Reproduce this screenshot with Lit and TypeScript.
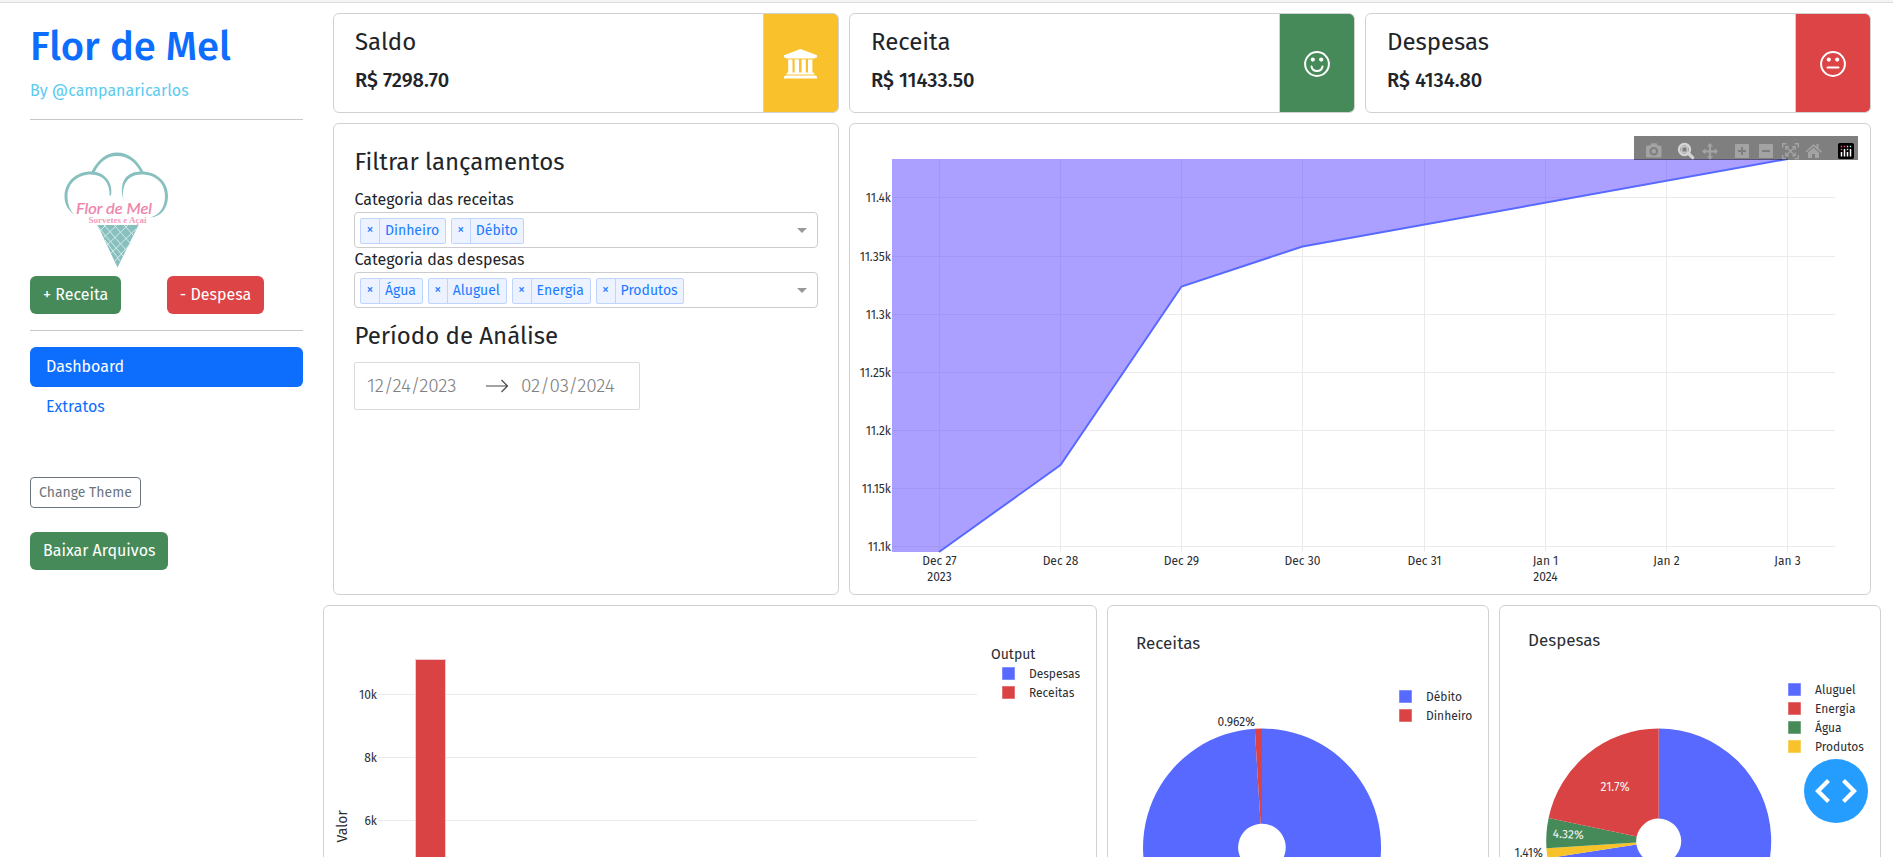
import { LitElement, html, svg, css } from "lit";
import { customElement } from "lit/decorators.js";

const tx = (x: number, y: number, s: string, cls = "t12", anchor = "start") =>
  svg`<text class=${cls} x=${x} y=${y} text-anchor=${anchor}>${s}</text>`;

const BLUE = "#5869ff", RED = "#d94344", GREEN = "#458a58", YELLOW = "#f8c22b";

const sector = (cx: number, cy: number, R: number, r: number, a: number, b: number, fill: string) => {
  const p = (rad: number, f: number) =>
    `${(cx + rad * Math.sin(f * 2 * Math.PI)).toFixed(2)} ${(cy - rad * Math.cos(f * 2 * Math.PI)).toFixed(2)}`;
  const big = b - a > 0.5 ? 1 : 0;
  return svg`<path fill=${fill} d="M${p(R, a)}A${R} ${R} 0 ${big} 1 ${p(R, b)}L${p(r, b)}A${r} ${r} 0 ${big} 0 ${p(r, a)}Z"/>`;
};

const swatch = (x: number, y: number, c: string) =>
  svg`<rect x=${x} y=${y} width="12" height="12" fill=${c} stroke=${c} stroke-opacity="0.5"/>`;

const chartStyles = css`
  :host { display: block; }
  svg { display: block; }
  text { font-family: "Fira Sans", "Noto Sans", "Open Sans", sans-serif; fill: #2a2e33; }
  .t12 { font-size: 12px; }
  .t14 { font-size: 14px; }
  .t17 { font-size: 17px; }
  .white { font-size: 12px; fill: #f4f4f4; }
  .grid { stroke: #ebebec; stroke-width: 1; fill: none; }
`;

@customElement("balance-chart")
class BalanceChart extends LitElement {
  static styles = [chartStyles, css`
    :host { position: relative; }
    .bar { position: absolute; top: 12px; right: 12px; width: 224px; height: 24px; background: rgba(0, 0, 0, 0.5); }
  `];
  render() {
    const xs = [0, 1, 2, 3, 4, 5, 6, 7].map((i) => Math.round(89 + i * 121.15) + 0.5);
    const ys = [73.5, 132.5, 190.5, 248.5, 306.5, 364.5, 422.5];
    const yl = ["11.4k", "11.35k", "11.3k", "11.25k", "11.2k", "11.15k", "11.1k"];
    const xl = ["Dec 27", "Dec 28", "Dec 29", "Dec 30", "Dec 31", "Jan 1", "Jan 2", "Jan 3"];
    return html`
      <svg width="1020" height="470" viewBox="0 0 1020 470">
        <path class="grid" d=${xs.map((x) => `M${x} 35V428`).join("") + ys.map((y) => `M42 ${y}H985`).join("")} />
        <path d="M42 35H937.5L452.5 122.5L331.5 162.5L210.5 341L89.5 428H42Z" fill="#5741ff" fill-opacity="0.5" />
        <path d="M89 428L210.5 341L331.5 162.5L452.5 122.5L937.5 35" fill="none" stroke=${BLUE} stroke-width="2" />
        ${yl.map((s, i) => tx(41, ys[i] + 4.2, s, "t12", "end"))}
        ${xl.map((s, i) => tx(xs[i], 441, s, "t12", "middle"))}
        ${tx(xs[0], 457, "2023", "t12", "middle")}
        ${tx(xs[5], 457, "2024", "t12", "middle")}
      </svg>
      <svg class="bar" viewBox="0 0 224 24">
        <g fill="#a3a3a3">
          <path fill-rule="evenodd" d="M13.5 9.500h2.700l1.300-2.200h5l1.300 2.200h2.200q1.500 0 1.500 1.500v9q0 1.500-1.500 1.500H13.500q-1.500 0-1.500-1.500v-9q0-1.500 1.500-1.500zM19.800 11a4.300 4.300 0 1 0 .01 0zm0 2a2.300 2.300 0 1 1-.01 0z"/>
          <path d="M76 7l3.200 3.600h-2.100v3.700h3.700v-2.100l3.200 3.200-3.200 3.200v-2.100h-3.700v3.700h2.100L76 23.800l-3.200-3.600h2.100v-3.700h-3.700v2.100L68 15.400l3.200-3.200v2.100h3.700v-3.700h-2.100z"/>
          <path fill-rule="evenodd" d="M101 8h14v14h-14zM107 11v3h-3v2h3v3h2v-3h3v-2h-3v-3z"/>
          <path fill-rule="evenodd" d="M125 8h14v14h-14zM128 14v2h8v-2z"/>
          <path d="M171.500 15.500L179.500 8l3 2.700V8h2v4.500l3.500 3-1 1.200-7.500-6.500-7.500 6.500z"/>
          <path d="M174 16.500l5.500-4.800 5.500 4.800V22h-4v-4h-3v4h-4z"/>
        </g>
        <g fill="none" stroke="#a3a3a3" stroke-width="1.400">
          <path d="M148.700 11.500V7.700h3.800M160.500 7.700h3.800v3.800M164.300 19v3.600h-3.800M152.500 22.600h-3.800V19"/>
          <path d="M152.500 11.200l8 8M160.500 11.200l-8 8" />
          <path d="M151.800 14v-3.200h3M158.200 10.800h3V14M161.200 16.500v3.200h-3M154.800 19.700h-3v-3.200" />
        </g>
        <circle cx="50.500" cy="13.500" r="5.400" fill="none" stroke="#d5d5d5" stroke-width="2.600"/>
        <rect x="47.800" y="10.800" width="5.400" height="5.400" fill="none" stroke="#d5d5d5" stroke-width="1.200"/>
        <path d="M54.500 17.500l4.200 4.200" stroke="#d5d5d5" stroke-width="3.200" stroke-linecap="round"/>
        <rect x="204" y="7" width="16" height="16" rx="1.800" fill="#000"/>
        <path d="M207.500 20.500v-4.500M210.500 20.500v-7.500M213.500 20.500v-4.500M216.500 20.500v-7.500" stroke="#fff" stroke-width="1.500"/>
        <path d="M206.800 10.500h1.400M209.800 10.500h1.400M206.800 13.500h1.400" stroke="#ff4d7d" stroke-width="1.400"/>
        <path d="M212.800 10.500h1.400M215.800 10.500h1.400M212.800 13.500h1.400" stroke="#c6e3f7" stroke-width="1.400"/>
      </svg>
    `;
  }
}

@customElement("value-bars")
class ValueBars extends LitElement {
  static styles = chartStyles;
  render() {
    return html`<svg width="772" height="251" viewBox="0 0 772 251">
      <path class="grid" d="M54 88.5H653M54 151.5H653M54 214.5H653" />
      <rect x="91.500" y="53.500" width="30" height="230" fill=${RED} stroke="#f6c9d0" />
      ${tx(53, 92.5, "10k", "t12", "end")}
      ${tx(53, 155.5, "8k", "t12", "end")}
      ${tx(53, 218.5, "6k", "t12", "end")}
      <g transform="translate(23 236.5) rotate(-90)">${tx(0, 0, "Valor", "t14")}</g>
      ${tx(667, 52.5, "Output", "t14")}
      ${swatch(678.5, 61.5, BLUE)}${swatch(678.5, 80.5, RED)}
      ${tx(705, 71.7, "Despesas")}${tx(705, 90.7, "Receitas")}
    </svg>`;
  }
}

@customElement("income-pie")
class IncomePie extends LitElement {
  static styles = chartStyles;
  render() {
    return html`<svg width="380" height="251" viewBox="0 0 380 251">
      ${tx(28, 42.5, "Receitas", "t17")}
      ${sector(154, 241.5, 119, 23.8, 0, 0.99038, BLUE)}
      ${sector(154, 241.5, 119, 23.8, 0.99038, 1, RED)}
      ${tx(109.5, 120, "0.962%")}
      ${swatch(291.5, 84.5, BLUE)}${swatch(291.5, 103.5, RED)}
      ${tx(318, 95, "Débito")}${tx(318, 114, "Dinheiro")}
    </svg>`;
  }
}

@customElement("expense-pie")
class ExpensePie extends LitElement {
  static styles = chartStyles;
  render() {
    const c: [number, number, number, number] = [158.7, 235.1, 112.5, 22.5];
    const items: [string, string][] = [["Aluguel", BLUE], ["Energia", RED], ["Água", GREEN], ["Produtos", YELLOW]];
    return html`<svg width="380" height="251" viewBox="0 0 380 251">
      ${tx(28, 40, "Despesas", "t17")}
      ${sector(...c, 0, 0.7257, BLUE)}
      ${sector(...c, 0.7257, 0.7398, YELLOW)}
      ${sector(...c, 0.7398, 0.783, GREEN)}
      ${sector(...c, 0.783, 1, RED)}
      ${tx(100.5, 185, "21.7%", "white")}
      <g transform="translate(52.5 231.5) rotate(3)">${tx(0, 0, "4.32%", "white")}</g>
      ${tx(14.5, 250.5, "1.41%")}
      ${items.map(([s, col], i) => svg`${swatch(288.5, 77.5 + i * 19, col)}${tx(315, 88 + i * 19, s)}`)}
    </svg>`;
  }
}

const bank = svg`<path fill="#fff" d="M16.500 0L33 6.300V8.400H31.500Q31.300 9.500 30.200 9.500H2.800Q1.700 9.500 1.500 8.400H0V6.300ZM4.200 10.500H8.500V23.500H10.600V10.500H15V23.500H17.600V10.500H21.800V23.500H24V10.500H28.400V23.500H29.200Q30.400 23.700 30.500 25.400H2.500Q2.600 23.700 3.800 23.500H4.200ZM1.500 26.600H31.500Q33 26.800 33 28.500V29.500H0V28.500Q0 26.800 1.500 26.600Z"/>`;
const face = (mouth: unknown) => svg`
  <circle cx="13" cy="13" r="11.900" fill="none" stroke="#fff" stroke-width="2"/>
  <circle cx="8.800" cy="8.600" r="2.100" fill="#fff"/><circle cx="17.200" cy="8.600" r="2.100" fill="#fff"/>${mouth}`;

@customElement("app-root")
class AppRoot extends LitElement {
  static styles = css`
    :host { display: block; height: 857px; overflow: hidden; background: #fff; color: #212529; font-family: "Fira Sans", "Noto Sans", "Open Sans", sans-serif; font-size: 16px; line-height: 24px; box-sizing: border-box; position: relative; white-space: nowrap; }
    * { box-sizing: border-box; }
    .topline { height: 3px; background: #f4f4f4; border-bottom: 1px solid #dedede; }
    .page { display: flex; }
    .side { width: 323px; padding: 20px 20px 0 30px; display: flex; flex-direction: column; align-items: flex-start; }
    .brand { margin: 0; font-size: 40px; line-height: 48px; font-weight: 500; color: #0d6efd; height: 48px; }
    .by { color: #5bcbf0; height: 24px; margin-top: 8px; }
    .rule { width: 273px; height: 1px; background: #c8c8c9; }
    .r1 { margin-top: 16px; }
    .logo { margin: 28px 0 0 30px; display: block; }
    .btns { display: flex; gap: 46px; margin-top: 5px; }
    .btn { height: 38px; border-radius: 6px; color: #fff; padding: 7px 13px; }
    .green { background: #458a58; }
    .red { background: #dc4446; }
    .btn.red { padding: 7px 12.5px; }
    .r2 { margin-top: 16px; }
    .nav { margin-top: 16px; width: 273px; display: flex; flex-direction: column; color: #0d6efd; }
    .link { height: 40px; padding: 8px 16px; border-radius: 6px; }
    .active { background: #0d6efd; color: #fff; }
    .theme { margin-top: 50px; height: 31px; border: 1px solid #6c757d; border-radius: 4px; color: #6c757d; font-size: 14px; line-height: 21px; padding: 4px 8px; }
    .download { margin-top: 24px; }
    .main { width: 1558px; padding-top: 10px; display: flex; flex-direction: column; gap: 10px; }
    .row { display: flex; gap: 10px; padding-left: 10px; }
    .bottom { padding-left: 0; }
    .card { border: 1px solid #d1d1d2; border-radius: 6px; background: #fff; overflow: hidden; flex: none; }
    .stat { width: 506px; height: 100px; display: flex; }
    .info { flex: 1; padding: 14px 0 0 21px; display: flex; flex-direction: column; border-right: 1px solid #d1d1d2; }
    .h { font-size: 24px; line-height: 29px; height: 29px; }
    .v { font-size: 20px; line-height: 24px; font-weight: 500; margin-top: 11px; }
    .tile { width: 75px; margin: -1px -1px -1px 0; padding: 1px 1px 0 0; display: flex; align-items: center; justify-content: center; border: 1px solid rgba(0, 0, 0, 0.176); border-left: 0; border-radius: 0 6px 6px 0; }
    .yellow { background: #f9c22c; }
    .filter { width: 506px; height: 472px; padding: 24px 20px; display: flex; flex-direction: column; align-items: flex-start; }
    .gap { margin-bottom: 11px; }
    .lab, .filter .h { padding-left: 0.5px; }
    .lab { height: 24px; }
    .select { width: 464px; height: 36px; border: 1px solid #ccc; border-radius: 4px; display: flex; gap: 5px; padding: 5px 10px 0 5px; font-size: 14px; color: #1a7bff; }
    .tag { height: 26px; display: flex; border: 1px solid #bfd5ff; border-radius: 2px; background: #ecf2ff; line-height: 23px; }
    .x { width: 19px; border-right: 1px solid #bfd5ff; text-align: center; font-size: 14px; line-height: 22px; }
    .tl { padding: 0 5.7px 0 5px; height: 24px; }
    .caret { margin: 10px 0 0 auto; width: 10px; height: 5px; background: #999; clip-path: polygon(0 0, 100% 0, 50% 100%); }
    .period { margin-top: 14px; }
    .dates { margin-top: 11px; width: 286px; height: 48px; border: 1px solid #dbdbdb; border-radius: 2px; display: flex; align-items: center; padding-left: 12px; font-size: 19px; font-weight: 300; letter-spacing: -0.15px; color: #808080; }
    .start { width: 119px; }
    .arrow { margin-right: 12px; }
    .chart { width: 1022px; height: 472px; }
    .bars { width: 774px; height: 400px; }
    .pie { width: 382px; height: 400px; }
    .debug { position: absolute; left: 1804px; top: 759px; }
    .script { font: italic 15px "Z003", "URW Chancery L", Lato, sans-serif; fill: #ee82a8; stroke: #ee82a8; stroke-width: 0.2px; }
    .slab { font: bold 7.5px "Liberation Serif", serif; fill: #f29bbb; }
  `;

  tag(s: string) {
    return html`<div class="tag"><span class="x">×</span><span class="tl">${s}</span></div>`;
  }

  stat(name: string, value: string, cls: string, icon: unknown) {
    return html`<div class="card stat">
      <div class="info">
        <div class="h">${name}</div>
        <div class="v">${value}</div>
      </div>
      <div class="tile ${cls}">${icon}</div>
    </div>`;
  }

  logo() {
    return html`<svg class="logo" width="116" height="123" viewBox="60 148 116 123">
      <g fill="#88c0bf">
        <path d="M91 172.500C98 159 107 152.500 117 152.500C128 152.500 138 160 143.500 172L140.500 172C135 161.500 127 156 117 156C107 156 99.500 162 94.500 172.500Z"/>
        <path d="M74 214.500C68 210 64.500 204 64.500 196.500C64.500 182 76 171.500 91 171.500C104 171.500 113.500 182 111 195.500L109.600 195.500C110 183 103 174.500 91 174.500C77 174.500 67.500 184 67.500 196.500C67.500 203.500 69.500 209.500 74 214.500Z"/>
        <path d="M123.500 199.500C120 189 121 171.500 141 171.500C157 171.500 168 182 168 196C168 209 160 217 150.500 217.500C159 215 165 208 165 196C165 183 155.500 174.500 141.500 174.500C126 174.500 121.500 187 123.500 199.500Z"/>
        <path d="M97.500 225H138.500L117.500 267.500Z"/>
      </g>
      <g stroke="#d5eae8" stroke-width="1" fill="none">
        <path d="M100 231L106 225M103 238L117 225M107 245L128 225M111 253L136 229M115 261L131 243M104 225L126 250M114 225L130 243M124 225L134 236M98 227L123 256M105 240L120 261"/>
      </g>
      <text class="script" x="76" y="213.500" textLength="76" lengthAdjust="spacingAndGlyphs">Flor de Mel</text>
      <text class="slab" x="88.500" y="222.500" textLength="58" lengthAdjust="spacingAndGlyphs">Sorvetes e Açaí</text>
    </svg>`;
  }

  render() {
    return html`
      <div class="topline"></div>
      <div class="page">
        <div class="side">
          <h1 class="brand">Flor de Mel</h1>
          <div class="by">By @campanaricarlos</div>
          <div class="rule r1"></div>
          ${this.logo()}
          <div class="btns">
            <div class="btn green">+ Receita</div>
            <div class="btn red">- Despesa</div>
          </div>
          <div class="rule r2"></div>
          <div class="nav">
            <div class="link active">Dashboard</div>
            <div class="link">Extratos</div>
          </div>
          <div class="theme">Change Theme</div>
          <div class="btn green download">Baixar Arquivos</div>
        </div>
        <div class="main">
          <div class="row">
            ${this.stat("Saldo", "R$ 7298.70", "yellow", html`<svg width="33" height="30" viewBox="0 0 33 30">${bank}</svg>`)}
            ${this.stat("Receita", "R$ 11433.50", "green", html`<svg width="26" height="26" viewBox="0 0 26 26">${face(svg`<path d="M7.500 15.500A5.600 5.600 0 0 0 18.500 15.500" fill="none" stroke="#fff" stroke-width="2" stroke-linecap="round"/>`)}</svg>`)}
            ${this.stat("Despesas", "R$ 4134.80", "red", html`<svg width="26" height="26" viewBox="0 0 26 26">${face(svg`<path d="M7.500 16.500H18.500" fill="none" stroke="#fff" stroke-width="2" stroke-linecap="round"/>`)}</svg>`)}
          </div>
          <div class="row">
            <div class="card filter">
              <div class="h gap">Filtrar lançamentos</div>
              <div class="lab">Categoria das receitas</div>
              <div class="select">${this.tag("Dinheiro")}${this.tag("Débito")}<span class="caret"></span></div>
              <div class="lab">Categoria das despesas</div>
              <div class="select">${this.tag("Água")}${this.tag("Aluguel")}${this.tag("Energia")}${this.tag("Produtos")}<span class="caret"></span></div>
              <div class="h period">Período de Análise</div>
              <div class="dates">
                <span class="start">12/24/2023</span>
                <svg class="arrow" width="23" height="14" viewBox="0 0 23 14"><path d="M0 7H21.500M15.500 1L21.500 7L15.500 13" fill="none" stroke="#484848" stroke-width="1.200"/></svg>
                <span>02/03/2024</span>
              </div>
            </div>
            <div class="card chart"><balance-chart></balance-chart></div>
          </div>
          <div class="row bottom">
            <div class="card bars"><value-bars></value-bars></div>
            <div class="card pie"><income-pie></income-pie></div>
            <div class="card pie"><expense-pie></expense-pie></div>
          </div>
        </div>
      </div>
      <svg class="debug" width="64" height="64" viewBox="0 0 64 64">
        <circle cx="32" cy="32" r="32" fill="#259dff"/>
        <path d="M24.500 21.500L14 32L24.500 42.500M39.500 21.500L50 32L39.500 42.500" fill="none" stroke="#fff" stroke-width="4.200"/>
      </svg>
    `;
  }
}
